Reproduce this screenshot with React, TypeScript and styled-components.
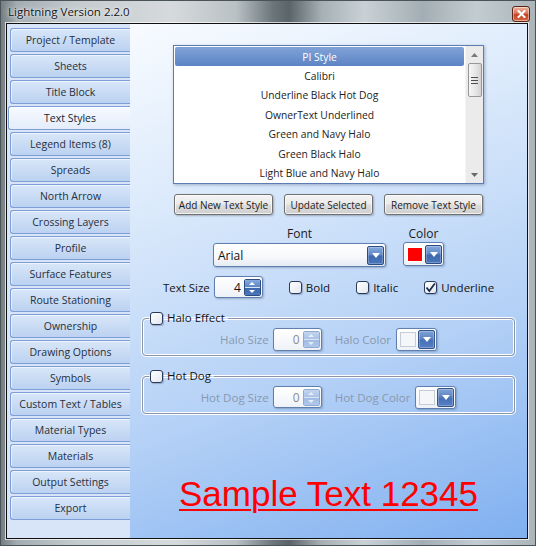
import React from "react";
import styled, { createGlobalStyle, css } from "styled-components";

const UI_FONT = `"Segoe UI", "Open Sans", "Noto Sans", sans-serif`;

const GlobalStyle = createGlobalStyle`
  html, body {
    margin: 0;
    padding: 0;
    background: #ffffff;
  }
  body {
    font-family: ${UI_FONT};
  }
`;

const sideItems = [
  "Project / Template",
  "Sheets",
  "Title Block",
  "Text Styles",
  "Legend Items (8)",
  "Spreads",
  "North Arrow",
  "Crossing Layers",
  "Profile",
  "Surface Features",
  "Route Stationing",
  "Ownership",
  "Drawing Options",
  "Symbols",
  "Custom Text / Tables",
  "Material Types",
  "Materials",
  "Output Settings",
  "Export",
];

const textStyles = [
  "PI Style",
  "Calibri",
  "Underline Black Hot Dog",
  "OwnerText Underlined",
  "Green and Navy Halo",
  "Green Black Halo",
  "Light Blue and Navy Halo",
];

/* ---------- window chrome ---------- */

const Window = styled.div`
  width: 536px;
  height: 546px;
  box-sizing: border-box;
  display: flex;
  flex-direction: column;
  padding: 0 7px 6px 5px;
  border: 1px solid #4a5458;
  background:
    linear-gradient(
      90deg,
      #747e83 0%,
      #a3adb1 3%,
      #c4cbce 14%,
      #d6dadc 32%,
      #b9c1c4 44%,
      #6a757a 51%,
      #5a6469 54%,
      #a6b0b4 60%,
      #c9d1d5 68%,
      #a3aeb4 79%,
      #c3ccd1 89%,
      #aab4b9 100%
    );
`;

const TitleBar = styled.div`
  height: 22px;
  display: flex;
  justify-content: space-between;
  align-items: flex-start;
  padding-left: 2px;
`;

const TitleText = styled.span`
  margin-top: 3px;
  font-size: 11.5px;
  color: #101418;
  text-shadow: 0 0 6px rgba(255, 255, 255, 0.95), 0 0 2px rgba(255, 255, 255, 0.9);
`;

const CloseButton = styled.div`
  width: 18px;
  height: 16px;
  margin: 5px -2px 0 0;
  box-sizing: border-box;
  display: flex;
  align-items: center;
  justify-content: center;
  border: 1px solid #5a2418;
  border-radius: 3px;
  background: linear-gradient(#eeb4a2 0%, #d8745a 45%, #c0401e 55%, #d86a42 100%);
  box-shadow: inset 0 0 0 1px rgba(255, 255, 255, 0.45);
`;

const Client = styled.div`
  flex: 1;
  display: flex;
  border: 1px solid #101010;
  box-shadow: 0 0 0 1px rgba(255, 255, 255, 0.7);
  overflow: hidden;
`;

/* ---------- sidebar ---------- */

const Sidebar = styled.div`
  width: 123px;
  flex-shrink: 0;
  box-sizing: border-box;
  display: flex;
  flex-direction: column;
  gap: 2px;
  padding: 4px 0 0 3px;
  background: #d8e5f8;
`;

const SideButton = styled.div<{ $active?: boolean }>`
  height: 24px;
  box-sizing: border-box;
  display: flex;
  align-items: center;
  justify-content: center;
  border: 1px solid #7d9ed6;
  border-right: none;
  border-radius: 3px 0 0 3px;
  background: linear-gradient(#d8e6f8, #bcd2f1);
  box-shadow: inset 1px 1px 0 rgba(255, 255, 255, 0.55);
  font-size: 10.5px;
  color: #26303c;
  white-space: nowrap;

  ${({ $active }) =>
    $active &&
    css`
      margin-left: -2px;
      margin-right: -1px;
      background: linear-gradient(#f7faff, #e3edfa);
      color: #1a2430;
    `}
`;

/* ---------- main panel ---------- */

const Main = styled.div`
  flex: 1;
  display: flex;
  flex-direction: column;
  align-items: center;
  background: linear-gradient(160deg, #f8fbff 0%, #dae9fb 30%, #b3d0f6 65%, #80b0f0 100%);
`;

const ListBox = styled.div`
  margin-top: 21px;
  width: 311px;
  height: 139px;
  box-sizing: border-box;
  display: flex;
  border: 1px solid #5b7db3;
  background: #ffffff;
  box-shadow: 1px 1px 3px rgba(40, 60, 100, 0.35);
`;

const ListItems = styled.div`
  flex: 1;
  padding: 1px 1px 0 1px;
`;

const ListItem = styled.div<{ $selected?: boolean }>`
  height: 19.4px;
  display: flex;
  align-items: center;
  justify-content: center;
  font-size: 10.3px;
  color: #222222;
  border-radius: 2px;

  ${({ $selected }) =>
    $selected &&
    css`
      background: linear-gradient(#80a2d8, #5d84c3);
      color: #ffffff;
    `}
`;

const ScrollBar = styled.div`
  width: 17px;
  display: flex;
  flex-direction: column;
  align-items: center;
  background: #ebebeb;
  border-left: 1px solid #f4f4f4;
`;

const ScrollArrow = styled.div`
  height: 17px;
  width: 100%;
  display: flex;
  align-items: center;
  justify-content: center;
`;

const ScrollThumb = styled.div`
  width: 14px;
  height: 34px;
  box-sizing: border-box;
  display: flex;
  flex-direction: column;
  align-items: center;
  justify-content: center;
  gap: 2px;
  border: 1px solid #979797;
  border-radius: 2px;
  background: linear-gradient(90deg, #f6f6f6, #e4e4e4 60%, #d2d2d2);
`;

const Grip = styled.span`
  width: 7px;
  height: 1px;
  background: #4e4e4e;
`;

const ScrollTrack = styled.div`
  flex: 1;
`;

const ButtonRow = styled.div`
  margin-top: 10px;
  display: flex;
  gap: 11px;
`;

const PushButton = styled.button<{ $w: number }>`
  width: ${({ $w }) => $w}px;
  height: 21px;
  padding: 0;
  border: 1px solid #707070;
  border-radius: 3px;
  background: linear-gradient(#f3f3f3 0%, #ebebeb 48%, #dddddd 52%, #cfcfcf 100%);
  box-shadow: inset 0 0 0 1px rgba(255, 255, 255, 0.7), 1px 1px 2px rgba(0, 0, 0, 0.25);
  font-family: ${UI_FONT};
  font-size: 10px;
  color: #1c1c1c;
  white-space: nowrap;
`;

const FontGrid = styled.div`
  margin-top: 11px;
  display: grid;
  grid-template-columns: 173px 41px;
  column-gap: 17px;
`;

const FieldCaption = styled.div`
  height: 16px;
  line-height: 16px;
  text-align: center;
  font-size: 12px;
  color: #1a1a1a;
`;

const ComboBox = styled.div`
  margin-top: 1px;
  height: 24px;
  box-sizing: border-box;
  display: flex;
  align-items: center;
  justify-content: space-between;
  padding: 0 1px 0 4px;
  border: 1px solid #5f7fae;
  border-radius: 3px;
  background: linear-gradient(#ffffff 0%, #f7f9fc 55%, #e6ebf3 100%);
  box-shadow: 1px 1px 2px rgba(40, 60, 100, 0.3);
  font-size: 12px;
  color: #111111;
`;

const BlueButton = styled.div<{ $muted?: boolean }>`
  width: 17px;
  height: 19px;
  box-sizing: border-box;
  display: flex;
  align-items: center;
  justify-content: center;
  border: 1px solid #2d4c80;
  border-radius: 2px;
  background: linear-gradient(#86aade 0%, #5e86c6 48%, #3e68ae 52%, #4a76bc 100%);
  box-shadow: inset 0 0 0 1px rgba(255, 255, 255, 0.25);

  ${({ $muted }) =>
    $muted &&
    css`
      border-color: #34558a;
      background: linear-gradient(#7fa2d6 0%, #5c82c0 48%, #4670b4 52%, #5680c2 100%);
    `}
`;

const ColorPicker = styled.div<{ $h?: number }>`
  width: 41px;
  height: ${({ $h }) => $h ?? 24}px;
  box-sizing: border-box;
  display: flex;
  align-items: center;
  justify-content: space-between;
  padding: 0 1px 0 3px;
  border: 1px solid #5f7fae;
  border-radius: 3px;
  background: linear-gradient(#ffffff, #eef2f8);
  box-shadow: 1px 1px 2px rgba(40, 60, 100, 0.3);
`;

const Swatch = styled.div<{ $color: string; $muted?: boolean }>`
  width: 16px;
  height: 15px;
  box-sizing: border-box;
  background: ${({ $color }) => $color};
  border: 1px solid ${({ $muted }) => ($muted ? "#c6ccd6" : "#ffffff")};
`;

const OptionsRow = styled.div`
  margin-top: 9px;
  height: 22px;
  display: flex;
  align-items: center;
`;

const RowLabel = styled.span<{ $disabled?: boolean }>`
  font-size: 11.5px;
  color: ${({ $disabled }) => ($disabled ? "#8a98ae" : "#141414")};
  white-space: nowrap;
`;

const Spinner = styled.div<{ $h?: number }>`
  margin-left: 4px;
  width: 49px;
  height: ${({ $h }) => $h ?? 22}px;
  box-sizing: border-box;
  display: flex;
  align-items: center;
  justify-content: flex-end;
  gap: 3px;
  padding-right: 1px;
  border: 1px solid #5f7fae;
  border-radius: 3px;
  background: linear-gradient(#ffffff, #eef2f8);
  box-shadow: 1px 1px 2px rgba(40, 60, 100, 0.3);
`;

const SpinValue = styled.span<{ $disabled?: boolean }>`
  font-size: 12px;
  color: ${({ $disabled }) => ($disabled ? "#8c8c8c" : "#111111")};
`;

const SpinColumn = styled.div<{ $disabled?: boolean }>`
  width: 17px;
  height: 17px;
  box-sizing: border-box;
  display: flex;
  flex-direction: column;
  border: 1px solid ${({ $disabled }) => ($disabled ? "#8ea9d2" : "#2d4c80")};
  border-radius: 2px;
  overflow: hidden;
`;

const SpinHalf = styled.div<{ $disabled?: boolean; $down?: boolean }>`
  flex: 1;
  display: flex;
  align-items: center;
  justify-content: center;
  background: ${({ $disabled, $down }) =>
    $disabled
      ? $down
        ? "linear-gradient(#9fbbe2, #b0c8ea)"
        : "linear-gradient(#c2d5ef, #a9c2e6)"
      : $down
        ? "linear-gradient(#3e68ae, #4a76bc)"
        : "linear-gradient(#86aade, #5e86c6)"};
  & + & {
    border-top: 1px solid ${({ $disabled }) => ($disabled ? "#d8e4f4" : "#9bb6e0")};
  }
`;

const CheckOption = styled.label`
  margin-left: 26px;
  display: flex;
  align-items: center;
  gap: 4px;
`;

const CheckBox = styled.span`
  width: 13px;
  height: 13px;
  box-sizing: border-box;
  display: inline-flex;
  align-items: center;
  justify-content: center;
  flex-shrink: 0;
  border: 1px solid #2b3a58;
  border-radius: 3px;
  background: linear-gradient(135deg, #ffffff, #e2e7f0);
  box-shadow: 1px 1px 1px rgba(40, 60, 100, 0.3);
`;

const Group = styled.fieldset<{ $top: number }>`
  margin: ${({ $top }) => $top}px 0 0 0;
  width: 373px;
  box-sizing: border-box;
  padding: 3px 0 5px 0;
  border: 1px solid #8b95a6;
  border-radius: 4px;
  box-shadow: inset 0 0 0 1px #ffffff, 0 0 0 1px #ffffff;
  min-inline-size: 0;
`;

const GroupLegend = styled.legend`
  margin-left: 6px;
  padding: 0 3px 0 1px;
  height: 14px;
  display: flex;
  align-items: center;
  gap: 4px;
  font-size: 11.5px;
  color: #141414;
  line-height: 14px;
`;

const GroupRow = styled.div`
  height: 22px;
  display: flex;
  align-items: center;
  justify-content: center;
`;

const GroupLabel = styled(RowLabel)`
  margin-left: 13px;
`;

const PickerSlot = styled.div`
  margin-left: 5px;
`;

const SampleText = styled.div`
  margin-top: 61px;
  font-family: "Liberation Sans", Arial, sans-serif;
  font-size: 35px;
  line-height: 38px;
  color: #ff0000;
  text-decoration: underline;
  text-decoration-thickness: 2px;
  text-underline-offset: 3px;
  white-space: nowrap;
`;

/* ---------- small drawings ---------- */

const DownArrow: React.FC<{ w?: number; h?: number; color?: string }> = ({
  w = 8,
  h = 5,
  color = "#ffffff",
}) => (
  <svg width={w} height={h} viewBox={`0 0 ${w} ${h}`}>
    <path d={`M0 0 H${w} L${w / 2} ${h} Z`} fill={color} />
  </svg>
);

const UpArrow: React.FC<{ w?: number; h?: number; color?: string }> = ({
  w = 7,
  h = 4,
  color = "#ffffff",
}) => (
  <svg width={w} height={h} viewBox={`0 0 ${w} ${h}`}>
    <path d={`M0 ${h} H${w} L${w / 2} 0 Z`} fill={color} />
  </svg>
);

const CloseGlyph = () => (
  <svg width="9" height="8" viewBox="0 0 9 8">
    <path
      d="M1.5 1 L7.5 7 M7.5 1 L1.5 7"
      stroke="#ffffff"
      strokeWidth="2"
      strokeLinecap="square"
    />
  </svg>
);

const CheckMark = () => (
  <svg width="11" height="11" viewBox="0 0 11 11">
    <path
      d="M1.5 5.5 L4.3 9 L9.8 1.5"
      stroke="#1d2d4c"
      strokeWidth="1.8"
      fill="none"
    />
  </svg>
);

/* ---------- composites ---------- */

const SpinBox: React.FC<{ value: string; disabled?: boolean; h?: number }> = ({
  value,
  disabled,
  h,
}) => {
  const tri = disabled ? "#e6eef8" : "#ffffff";
  return (
    <Spinner $h={h}>
      <SpinValue $disabled={disabled}>{value}</SpinValue>
      <SpinColumn $disabled={disabled}>
        <SpinHalf $disabled={disabled}>
          <UpArrow w={6} h={3} color={tri} />
        </SpinHalf>
        <SpinHalf $disabled={disabled} $down>
          <DownArrow w={6} h={3} color={tri} />
        </SpinHalf>
      </SpinColumn>
    </Spinner>
  );
};

const ColorBox: React.FC<{ color: string; muted?: boolean; h?: number }> = ({
  color,
  muted,
  h,
}) => (
  <ColorPicker $h={h}>
    <Swatch $color={color} $muted={muted} />
    <BlueButton $muted={muted}>
      <DownArrow />
    </BlueButton>
  </ColorPicker>
);

const App: React.FC = () => {
  return (
    <>
      <GlobalStyle />
      <Window>
        <TitleBar>
          <TitleText>Lightning Version 2.2.0</TitleText>
          <CloseButton>
            <CloseGlyph />
          </CloseButton>
        </TitleBar>
        <Client>
          <Sidebar>
            {sideItems.map(item => (
              <SideButton key={item} $active={item === "Text Styles"}>
                {item}
              </SideButton>
            ))}
          </Sidebar>
          <Main>
            <ListBox>
              <ListItems>
                {textStyles.map((name, i) => (
                  <ListItem key={name} $selected={i === 0}>
                    {name}
                  </ListItem>
                ))}
              </ListItems>
              <ScrollBar>
                <ScrollArrow>
                  <UpArrow color="#7a7a7a" />
                </ScrollArrow>
                <ScrollThumb>
                  <Grip />
                  <Grip />
                  <Grip />
                </ScrollThumb>
                <ScrollTrack />
                <ScrollArrow>
                  <DownArrow w={7} h={4} color="#6a6a6a" />
                </ScrollArrow>
              </ScrollBar>
            </ListBox>

            <ButtonRow>
              <PushButton $w={99}>Add New Text Style</PushButton>
              <PushButton $w={89}>Update Selected</PushButton>
              <PushButton $w={99}>Remove Text Style</PushButton>
            </ButtonRow>

            <FontGrid>
              <FieldCaption>Font</FieldCaption>
              <FieldCaption>Color</FieldCaption>
              <ComboBox>
                <span>Arial</span>
                <BlueButton>
                  <DownArrow />
                </BlueButton>
              </ComboBox>
              <ColorBox color="#ff0000" />
            </FontGrid>

            <OptionsRow>
              <RowLabel>Text Size</RowLabel>
              <SpinBox value="4" />
              <CheckOption>
                <CheckBox />
                <RowLabel>Bold</RowLabel>
              </CheckOption>
              <CheckOption>
                <CheckBox />
                <RowLabel>Italic</RowLabel>
              </CheckOption>
              <CheckOption>
                <CheckBox>
                  <CheckMark />
                </CheckBox>
                <RowLabel>Underline</RowLabel>
              </CheckOption>
            </OptionsRow>

            <Group $top={13}>
              <GroupLegend>
                <CheckBox />
                Halo Effect
              </GroupLegend>
              <GroupRow>
                <RowLabel $disabled>Halo Size</RowLabel>
                <SpinBox value="0" disabled h={23} />
                <GroupLabel $disabled>Halo Color</GroupLabel>
                <PickerSlot>
                  <ColorBox color="#f4f6fa" muted h={23} />
                </PickerSlot>
              </GroupRow>
            </Group>

            <Group $top={13}>
              <GroupLegend>
                <CheckBox />
                Hot Dog
              </GroupLegend>
              <GroupRow>
                <RowLabel $disabled>Hot Dog Size</RowLabel>
                <SpinBox value="0" disabled h={22} />
                <GroupLabel $disabled>Hot Dog Color</GroupLabel>
                <PickerSlot>
                  <ColorBox color="#f4f6fa" muted h={23} />
                </PickerSlot>
              </GroupRow>
            </Group>

            <SampleText>Sample Text 12345</SampleText>
          </Main>
        </Client>
      </Window>
    </>
  );
};

export default App;
